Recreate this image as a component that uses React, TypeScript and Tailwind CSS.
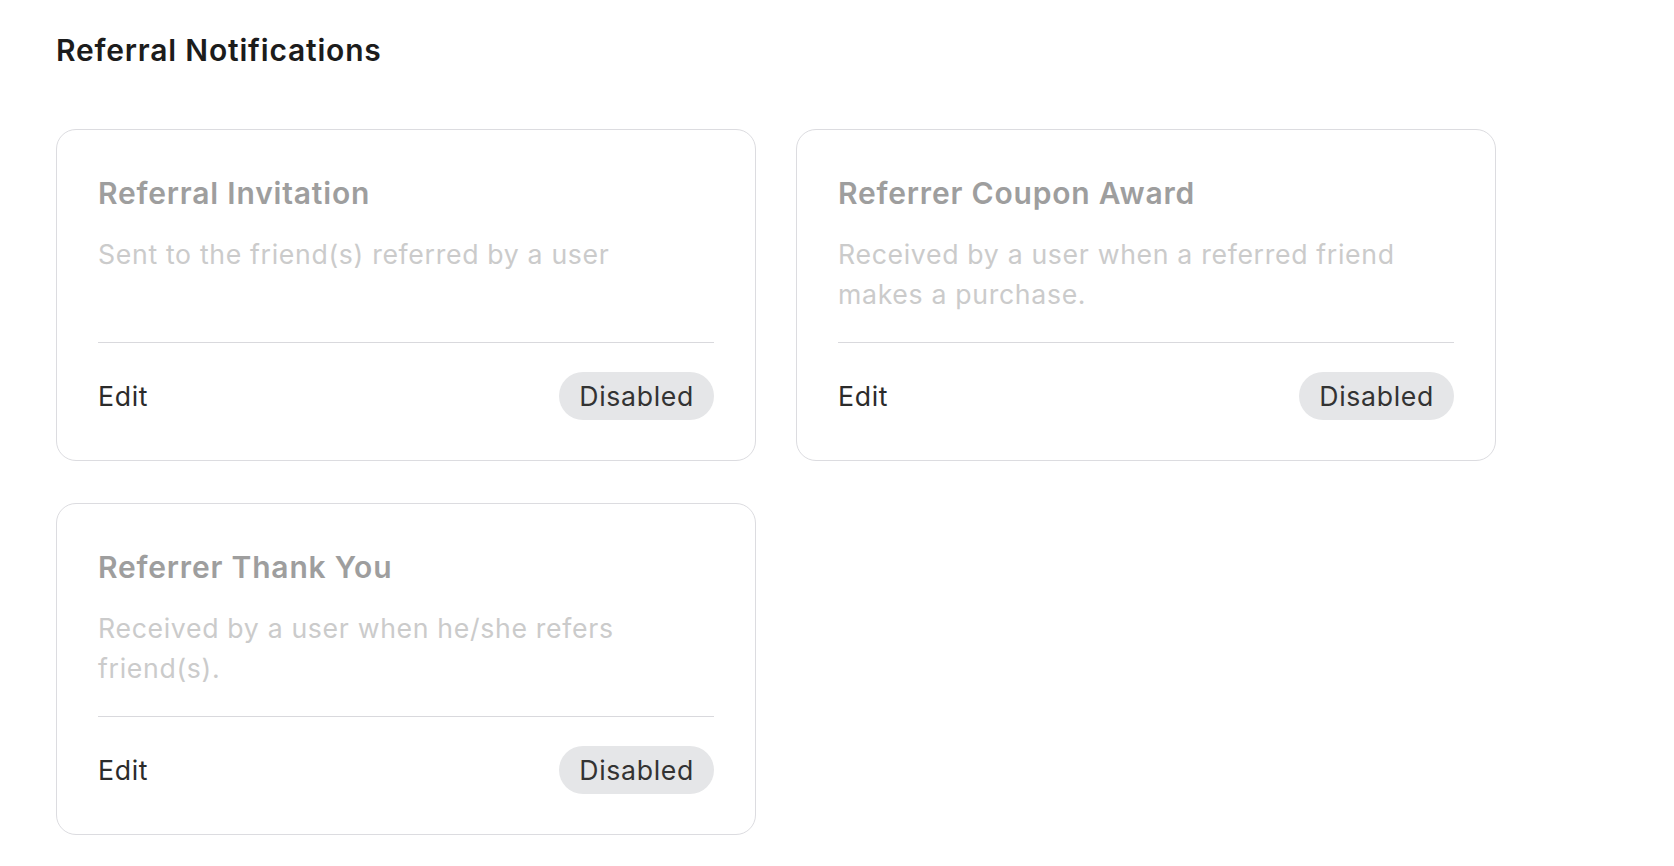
import React from "react";

const cards = [
  { title: "Referral Invitation", desc: "Sent to the friend(s) referred by a user" },
  { title: "Referrer Coupon Award", desc: "Received by a user when a referred friend makes a purchase." },
  { title: "Referrer Thank You", desc: "Received by a user when he/she refers friend(s)." },
];

function Card({ title, desc }: { title: string; desc: string }) {
  return (
    <div className="w-[700px] rounded-[20px] border border-[#dcdce0] bg-white px-[41px] pt-[38px] pb-[40px]">
      <div className="text-[30px] font-semibold leading-[50px] tracking-[0.027em] text-[#9e9e9e]">{title}</div>
      <div className="mt-[16px] h-[80px] text-[26.67px] leading-[40px] tracking-[0.025em] text-[#cbcbcb]">{desc}</div>
      <div className="mt-[28px] h-px bg-[#d9d9dd]" />
      <div className="mt-[29px] flex h-[48px] items-center justify-between">
        <span className="text-[26.67px] leading-[40px] tracking-[0.025em] text-[#2b2b2b]">Edit</span>
        <span className="flex h-[48px] items-center rounded-full bg-[#e5e6e8] px-[20px] text-[26.67px] leading-[40px] tracking-[0.025em] text-[#333333]">
          Disabled
        </span>
      </div>
    </div>
  );
}

export default function App() {
  return (
    <div
      className="min-h-screen bg-white pl-[56px] pt-[25px]"
      style={{ fontFamily: "Inter, 'Noto Sans', sans-serif" }}
    >
      <h1 className="text-[30px] font-semibold leading-[50px] tracking-[0.027em] text-[#1c1c1c]">Referral Notifications</h1>
      <div className="mt-[54px] grid grid-cols-[700px_699px] gap-x-[40px] gap-y-[42px]">
        {cards.map((c) => (
          <Card key={c.title} title={c.title} desc={c.desc} />
        ))}
      </div>
    </div>
  );
}
